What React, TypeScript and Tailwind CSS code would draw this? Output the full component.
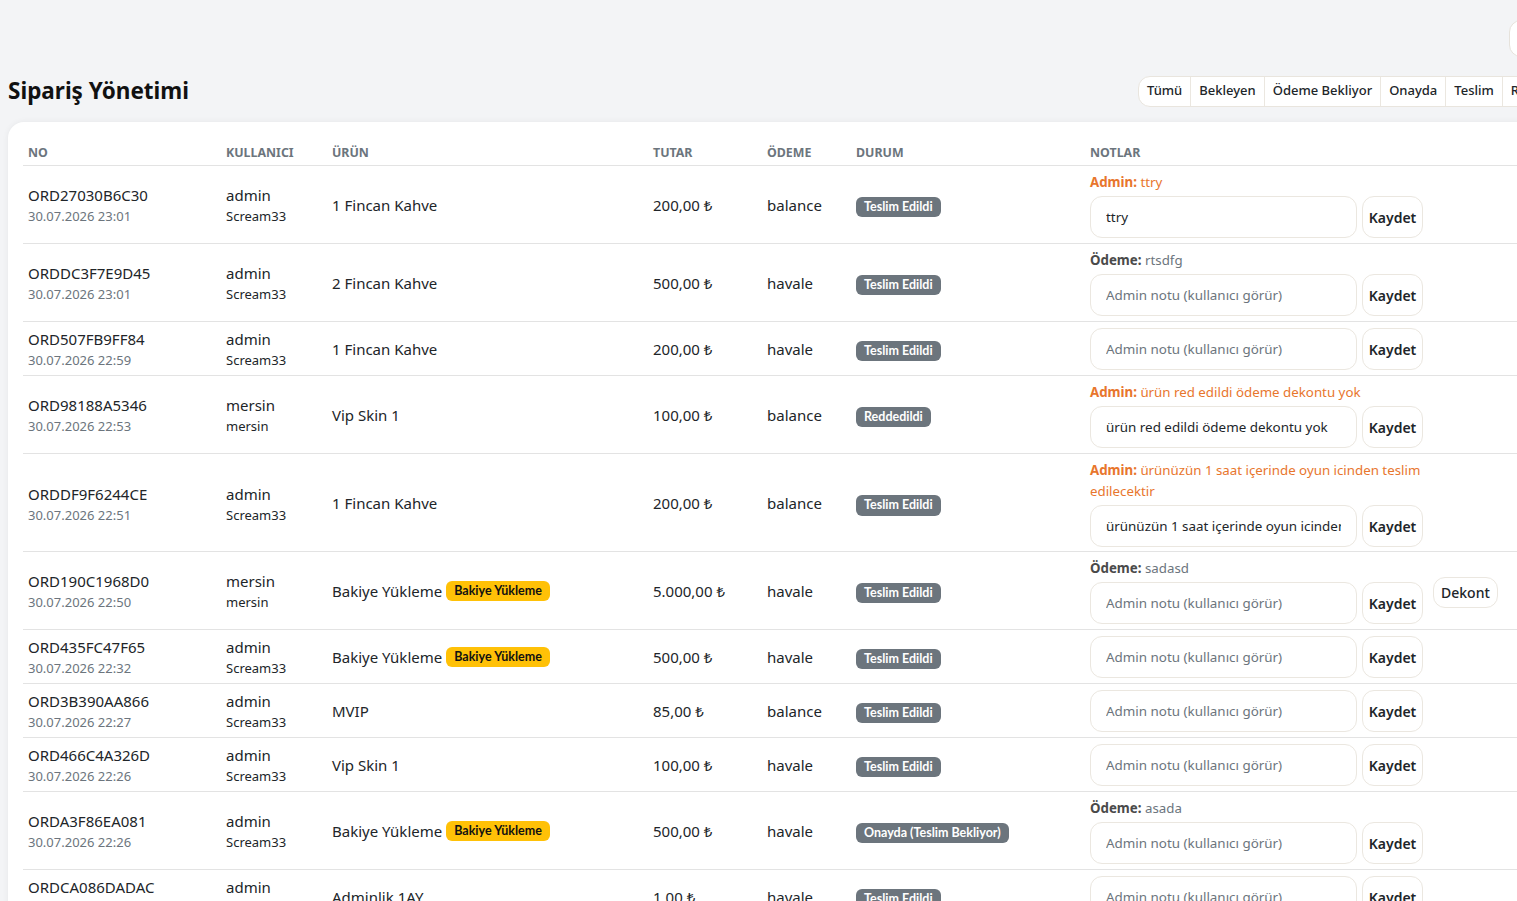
import React from "react";

type Note = { kind: "admin" | "odeme"; text: string } | null;
type Row = {
  no: string;
  date: string;
  user: string;
  sub: string;
  product: string;
  bakiye?: boolean;
  amount: string;
  pay: string;
  status: string;
  note: Note;
  value?: string;
  dekont?: boolean;
  tight?: boolean;
};

const rows: Row[] = [
  { no: "ORD27030B6C30", date: "30.07.2026 23:01", user: "admin", sub: "Scream33", product: "1 Fincan Kahve", amount: "200,00 ₺", pay: "balance", status: "Teslim Edildi", note: { kind: "admin", text: "ttry" }, value: "ttry" },
  { no: "ORDDC3F7E9D45", date: "30.07.2026 23:01", user: "admin", sub: "Scream33", product: "2 Fincan Kahve", amount: "500,00 ₺", pay: "havale", status: "Teslim Edildi", note: { kind: "odeme", text: "rtsdfg" } },
  { no: "ORD507FB9FF84", date: "30.07.2026 22:59", user: "admin", sub: "Scream33", product: "1 Fincan Kahve", amount: "200,00 ₺", pay: "havale", status: "Teslim Edildi", note: null },
  { no: "ORD98188A5346", date: "30.07.2026 22:53", user: "mersin", sub: "mersin", product: "Vip Skin 1", amount: "100,00 ₺", pay: "balance", status: "Reddedildi", note: { kind: "admin", text: "ürün red edildi ödeme dekontu yok" }, value: "ürün red edildi ödeme dekontu yok" },
  { no: "ORDDF9F6244CE", date: "30.07.2026 22:51", user: "admin", sub: "Scream33", product: "1 Fincan Kahve", amount: "200,00 ₺", pay: "balance", status: "Teslim Edildi", note: { kind: "admin", text: "ürünüzün 1 saat içerinde oyun icinden teslim edilecektir" }, value: "ürünüzün 1 saat içerinde oyun icinden teslim edilecektir", tight: true },
  { no: "ORD190C1968D0", date: "30.07.2026 22:50", user: "mersin", sub: "mersin", product: "Bakiye Yükleme", bakiye: true, amount: "5.000,00 ₺", pay: "havale", status: "Teslim Edildi", note: { kind: "odeme", text: "sadasd" }, dekont: true },
  { no: "ORD435FC47F65", date: "30.07.2026 22:32", user: "admin", sub: "Scream33", product: "Bakiye Yükleme", bakiye: true, amount: "500,00 ₺", pay: "havale", status: "Teslim Edildi", note: null },
  { no: "ORD3B390AA866", date: "30.07.2026 22:27", user: "admin", sub: "Scream33", product: "MVIP", amount: "85,00 ₺", pay: "balance", status: "Teslim Edildi", note: null },
  { no: "ORD466C4A326D", date: "30.07.2026 22:26", user: "admin", sub: "Scream33", product: "Vip Skin 1", amount: "100,00 ₺", pay: "havale", status: "Teslim Edildi", note: null },
  { no: "ORDA3F86EA081", date: "30.07.2026 22:26", user: "admin", sub: "Scream33", product: "Bakiye Yükleme", bakiye: true, amount: "500,00 ₺", pay: "havale", status: "Onayda (Teslim Bekliyor)", note: { kind: "odeme", text: "asada" } },
  { no: "ORDCA086DADAC", date: "30.07.2026 22:25", user: "admin", sub: "Scream33", product: "Adminlik 1AY", amount: "1,00 ₺", pay: "havale", status: "Teslim Edildi", note: null },
];

const grid = "grid grid-cols-[198px_106px_321px_114px_89px_234px_1fr]";
const tabs = ["Tümü", "Bekleyen", "Ödeme Bekliyor", "Onayda", "Teslim", "Reddedildi", "İptal"];
const badgeFont = { fontFamily: 'Lato, "Noto Sans", sans-serif' };

export default function App() {
  return (
    <div
      className="w-[1517px] h-[901px] overflow-hidden bg-[#f3f4f6] text-[#212529]"
      style={{ fontFamily: '"Noto Sans", "Open Sans", sans-serif' }}
    >
      <div className="w-[1620px]">
        {/* top bar */}
        <div className="pt-[20px] flex">
          <div className="ml-[1509px] h-[37px] w-[100px] bg-white border border-[#e6e2db] rounded-l-[12px]" />
        </div>

        {/* title row */}
        <div className="mt-[18px] grid grid-cols-[1138px_auto] items-center h-[32px]">
          <h1 className="pl-[8px] text-[22.5px] font-bold leading-none text-[#111]">Sipariş Yönetimi</h1>
          <div className="flex flex-none h-[31px] bg-white border border-[#e9e5de] rounded-l-[12px] overflow-hidden whitespace-nowrap">
            {tabs.map((t, i) => (
              <div
                key={t}
                className={`px-[8px] flex-none flex items-center text-[13px] font-medium text-[#212529] ${i > 0 ? "border-l border-[#ebe7e0]" : ""}`}
              >
                {t}
              </div>
            ))}
          </div>
        </div>

        {/* card */}
        <div className="mt-[15px] ml-[8px] bg-white rounded-tl-[16px] shadow-[0_0_6px_rgba(0,0,0,0.06)] px-[15px] pt-[16px] pb-[20px]">
          <div className={`${grid} border-b border-[#e3e3e3] h-[28px] pt-[3px] items-center text-[12.4px] font-bold text-[#6c757d] uppercase`}>
            <div className="pl-[5px]">NO</div>
            <div className="pl-[5px]">KULLANICI</div>
            <div className="pl-[5px]">ÜRÜN</div>
            <div className="pl-[5px]">TUTAR</div>
            <div className="pl-[5px]">ÖDEME</div>
            <div className="pl-[5px]">DURUM</div>
            <div className="pl-[5px]">NOTLAR</div>
          </div>

          {rows.map((r) => (
            <div key={r.no} className={`${grid} border-b border-[#e3e3e3] items-center pt-[6px] ${r.tight ? "pb-[4px]" : "pb-[5px]"}`}>
              <div className="pl-[5px]">
                <div className="text-[15px] leading-[22px]">{r.no}</div>
                <div className="text-[13px] leading-[20px] text-[#6c757d]">{r.date}</div>
              </div>
              <div className="pl-[5px]">
                <div className="text-[15px] leading-[22px]">{r.user}</div>
                <div className="text-[13px] leading-[20px]">{r.sub}</div>
              </div>
              <div className="pl-[5px] flex items-center gap-[4px] text-[15px]">
                <span>{r.product}</span>
                {r.bakiye && (
                  <span
                    className="bg-[#ffc107] text-[#111] text-[12.5px] font-bold leading-none px-[8px] py-[4px] rounded-[6px]"
                    style={badgeFont}
                  >
                    Bakiye Yükleme
                  </span>
                )}
              </div>
              <div className="pl-[5px] text-[15px]">{r.amount}</div>
              <div className="pl-[5px] text-[15px]">{r.pay}</div>
              <div className="pl-[5px]">
                <span
                  className="inline-block bg-[#6c757d] text-white text-[12.5px] font-bold leading-none px-[8px] py-[4px] rounded-[6px]"
                  style={badgeFont}
                >
                  {r.status}
                </span>
              </div>
              <div className="pl-[5px] flex items-center gap-[10px]">
                <div className="w-[333px] flex flex-col gap-[3px]">
                  {r.note && (
                    <div className="w-[345px] text-[13.3px] leading-[21px]">
                      {r.note.kind === "admin" ? (
                        <span className="text-[#e8762d]">
                          <span className="font-bold">Admin:</span> {r.note.text}
                        </span>
                      ) : (
                        <span className="text-[#6c757d]">
                          <span className="font-bold text-[#4a4a4a]">Ödeme:</span> {r.note.text}
                        </span>
                      )}
                    </div>
                  )}
                  <div className="flex gap-[5px]">
                    <input
                      defaultValue={r.value ?? ""}
                      placeholder="Admin notu (kullanıcı görür)"
                      className="w-[267px] h-[42px] rounded-[12px] border border-[#ebe7e0] px-[15px] text-[13.4px] text-[#212529] placeholder:text-[#6c757d] outline-none bg-white"
                    />
                    <button className="w-[61px] h-[42px] rounded-[12px] border border-[#ebe7e0] bg-white text-[14px] font-semibold text-[#212529]">
                      Kaydet
                    </button>
                  </div>
                </div>
                {r.dekont && (
                  <button className="h-[31px] px-[7px] rounded-[12px] border border-[#ebe7e0] bg-white text-[14px] font-medium text-[#212529] mt-[2px]">
                    Dekont
                  </button>
                )}
              </div>
            </div>
          ))}
        </div>
      </div>
    </div>
  );
}
